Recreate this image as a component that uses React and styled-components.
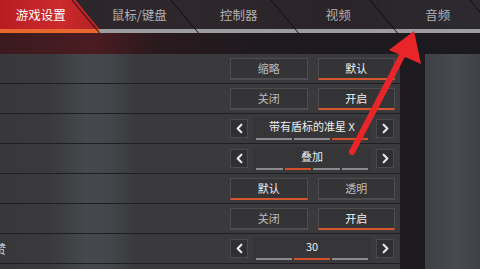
import React from "react";
import styled, { createGlobalStyle, css } from "styled-components";
import { ChevronLeft, ChevronRight } from "lucide-react";

const GlobalStyle = createGlobalStyle`
  html, body {
    margin: 0;
    padding: 0;
    background: #1c1a1e;
  }
  * {
    box-sizing: border-box;
  }
`;

const Screen = styled.div`
  position: relative;
  width: 480px;
  height: 269px;
  overflow: hidden;
  background: #1c1a1e;
  font-family: "Noto Sans CJK SC", "Noto Sans", sans-serif;
`;

const TabBar = styled.div`
  display: flex;
  height: 33px;
  background: linear-gradient(90deg, #2a2327 0%, #2e282c 40%, #2a2428 70%, #2c2a30 100%);
`;

const Tab = styled.div`
  position: relative;
  flex: 0 0 99.5px;
  display: flex;
  align-items: center;
  justify-content: center;
  padding-right: ${(p) => (p.$first ? 18 : 20)}px;
  padding-bottom: 1px;
  font-size: 12.5px;
  color: #b3afb2;
  border-bottom: 4px solid #9d9d9f;

  &::after {
    content: "";
    position: absolute;
    right: 0;
    top: 0;
    bottom: -4px;
    width: 1px;
    background: #100d14;
    transform-origin: bottom;
    transform: skewX(40deg);
  }

  ${(p) =>
    p.$active &&
    css`
      color: #fff;
      border-bottom-color: #e8672e;
      &::before {
        content: "";
        position: absolute;
        inset: 0 0 0 0;
        background: linear-gradient(90deg, #b81d22 0%, #cc2a2c 60%, #b22024 100%);
        clip-path: polygon(0 0, 76% 0, 100% 100%, 0 100%);
      }
    `}
`;

const TabLabel = styled.span`
  position: relative;
  z-index: 1;
`;

const Band = styled.div`
  height: 21px;
  background: linear-gradient(90deg, #3a1a1e 0%, #4a1c22 20%, #2a1a1e 32%, #1e1a1e 55%, #1c1a1f 100%);
`;

const Body = styled.div`
  display: flex;
  gap: 25px;
`;

const Rows = styled.div`
  width: 400px;
  display: flex;
  flex-direction: column;
  background: linear-gradient(90deg, #38383b 0, #3a3a3d 50px, #46484d 85px, #44464b 110px, #3a3a3d 135px, #3a3a3d 100%);
`;

const SidePanel = styled.div`
  flex: 1;
  height: 220px;
  background: linear-gradient(90deg, #3e4045 0%, #474a4f 60%, #3f4146 100%);
`;

const Row = styled.div`
  height: 30px;
  display: flex;
  align-items: center;
  justify-content: space-between;
  padding-right: 5px;
  border-bottom: 1.5px solid #1f1f22;
`;

const Label = styled.span`
  margin-left: -6px;
  font-size: 12px;
  color: #c9c9c9;
`;

const Toggle = styled.div`
  display: flex;
  gap: 10px;
  width: 165px;
`;

const Choice = styled.div`
  flex: 1;
  height: 22px;
  display: flex;
  align-items: center;
  justify-content: center;
  font-size: 11px;
  color: ${(p) => (p.$on ? "#f2f2f2" : "#bdbdbd")};
  background: #343436;
  border: 1px solid #4d4d50;
  border-bottom: 2px solid ${(p) => (p.$on ? "#d4572f" : "#4d4d50")};
`;

const Selector = styled.div`
  display: flex;
  align-items: center;
  gap: 5px;
  width: 164px;
  margin-right: 1px;
`;

const ArrowBox = styled.div`
  flex: 0 0 18px;
  height: 19px;
  display: flex;
  align-items: center;
  justify-content: center;
  background: #2f2f31;
  border: 1px solid #4a4a4d;
  color: #e6e6e6;
`;

const Value = styled.div`
  flex: 1;
  height: 24px;
  display: flex;
  flex-direction: column;
  align-items: center;
  justify-content: space-between;
  padding: 1px;
  background: #363638;
`;

const ValueText = styled.span`
  font-size: 11px;
  line-height: 16px;
  color: #ececec;
`;

const Segments = styled.div`
  display: flex;
  gap: 2px;
  width: 112px;
`;

const Segment = styled.div`
  flex: 1;
  height: 2px;
  background: ${(p) => (p.$on ? "#d4502c" : "#8c8c8e")};
`;

const Annotation = styled.svg`
  position: absolute;
  left: 0;
  top: 0;
  pointer-events: none;
`;

const tabs = ["游戏设置", "鼠标/键盘", "控制器", "视频", "音频"];

const rows = [
  { type: "toggle", options: ["缩略", "默认"], on: 1 },
  { type: "toggle", options: ["关闭", "开启"], on: 1 },
  { type: "select", value: "带有盾标的准星 X", count: 3, on: 2 },
  { type: "select", value: "叠加", count: 4, on: 1 },
  { type: "toggle", options: ["默认", "透明"], on: 0 },
  { type: "toggle", options: ["关闭", "开启"], on: 1 },
  { type: "select", value: "30", count: 3, on: 1, label: "赞" },
];

const App = () => (
  <>
    <GlobalStyle />
    <Screen>
      <TabBar>
        {tabs.map((t, i) => (
          <Tab key={t} $active={i === 0} $first={i === 0}>
            <TabLabel>{t}</TabLabel>
          </Tab>
        ))}
      </TabBar>
      <Band />
      <Body>
        <Rows>
          {rows.map((r, i) => (
            <Row key={i}>
              <Label>{r.label || ""}</Label>
              {r.type === "toggle" ? (
                <Toggle>
                  {r.options.map((o, j) => (
                    <Choice key={o} $on={j === r.on}>
                      {o}
                    </Choice>
                  ))}
                </Toggle>
              ) : (
                <Selector>
                  <ArrowBox>
                    <ChevronLeft size={15} strokeWidth={3.4} />
                  </ArrowBox>
                  <Value>
                    <ValueText>{r.value}</ValueText>
                    <Segments>
                      {Array.from({ length: r.count }).map((_, j) => (
                        <Segment key={j} $on={j === r.on} />
                      ))}
                    </Segments>
                  </Value>
                  <ArrowBox>
                    <ChevronRight size={15} strokeWidth={3.4} />
                  </ArrowBox>
                </Selector>
              )}
            </Row>
          ))}
        </Rows>
        <SidePanel />
      </Body>
      <Annotation width="480" height="269" viewBox="0 0 480 269">
        <line x1="352" y1="152" x2="404" y2="52" stroke="#e8262a" strokeWidth="6" strokeLinecap="round" />
        <polygon points="414,31 421,64 389,50" fill="#e8262a" />
      </Annotation>
    </Screen>
  </>
);

export default App;
